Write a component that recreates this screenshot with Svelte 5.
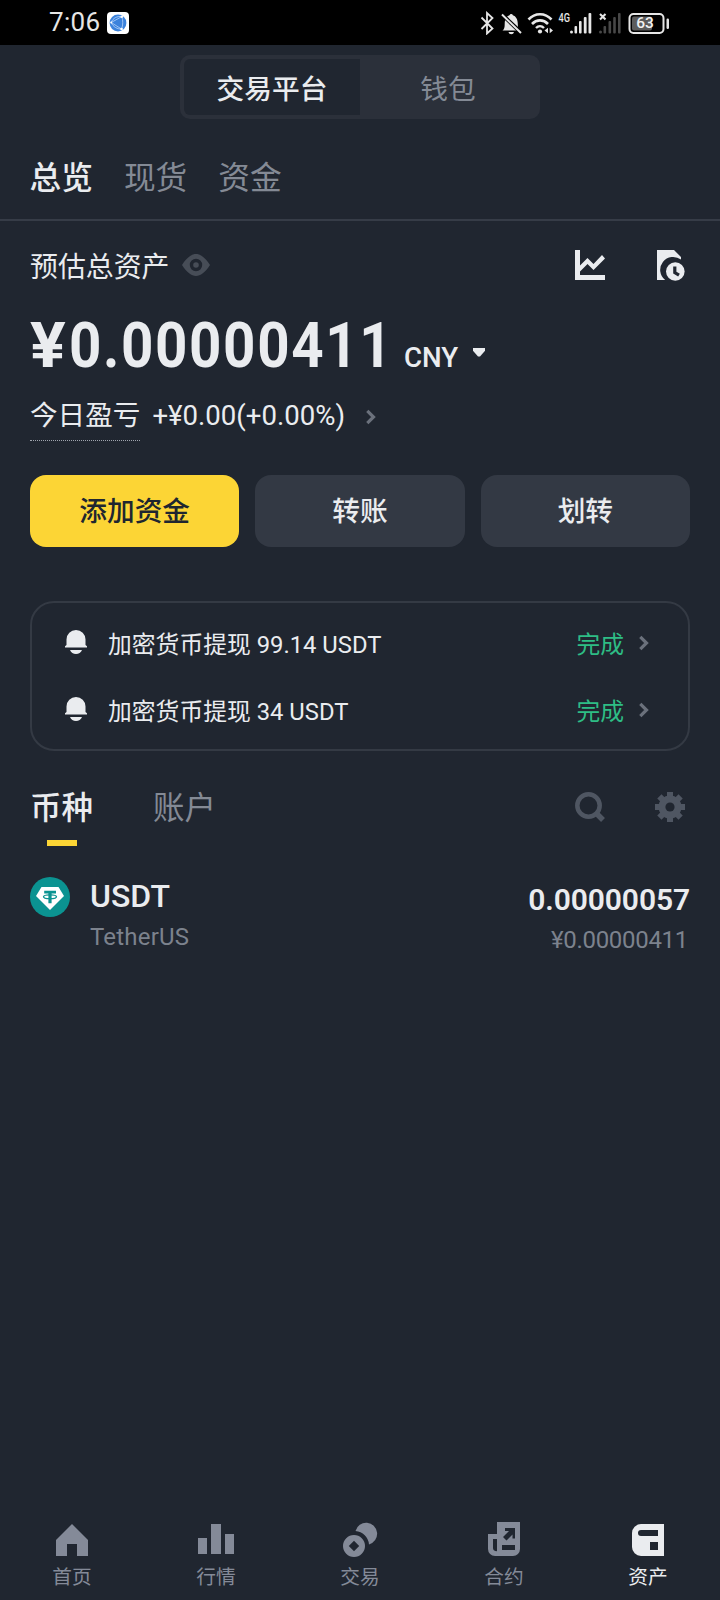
<script lang="ts">
  const accountTabs = ['总览', '现货', '资金'];
  const actions = ['添加资金', '转账', '划转'];

  const notices = [
    { title: '加密货币提现', amount: '99.14 USDT', status: '完成' },
    { title: '加密货币提现', amount: '34 USDT', status: '完成' },
  ];

  const navItems = [
    { id: 'home', label: '首页' },
    { id: 'markets', label: '行情' },
    { id: 'trade', label: '交易' },
    { id: 'futures', label: '合约' },
    { id: 'assets', label: '资产' },
  ];

  let platform = $state('exchange');
  let activeTab = $state('总览');
  let listTab = $state('coins');
  let activeNav = $state('assets');
</script>

{#snippet chevron()}
  <svg class="chevron" width="10" height="16" viewBox="0 0 10 16">
    <path d="M1.3 1.8 7.5 8l-6.2 6.2" fill="none" stroke="currentColor" stroke-width="3.2" />
  </svg>
{/snippet}

<div class="screen">
  <header class="status-bar">
    <span class="clock">7:06</span>
    <svg class="app-badge" width="22" height="22" viewBox="0 0 22 22">
      <rect width="22" height="22" rx="4" fill="#fff" />
      <circle cx="11" cy="11" r="8.4" fill="#3b82dc" />
      <path d="M4.2 10.5 14.8 4.6M4.2 10.5l10.4 6.6M14.8 4.6c1.4 4 1.2 8.5-.2 12.5M4.2 10.5C6 6 10 4 14.8 4.6M4.2 10.5c2 4.5 6 6.6 10.4 6.6" fill="none" stroke="#b9d6fa" stroke-width=".8" />
      <g fill="#fff">
        <circle cx="4.2" cy="10.5" r="1" />
        <circle cx="14.8" cy="4.8" r="1.3" />
        <circle cx="14.6" cy="17" r="1.3" />
      </g>
    </svg>
    <svg class="sys-icons" width="190" height="24" viewBox="480 10 190 24">
      <g fill="none" stroke="#e6e6e6" stroke-width="1.8">
        <path d="m481.500 16.500 11 11-5.500 5V12l5.500 5-11 11" />
        <path d="M528.500 18.500c6.500-7 16.500-7 23 0" stroke-width="2.6" />
        <path d="M532 23c4.500-4.800 11.500-4.800 16 0" stroke-width="2.6" />
        <path d="M536 27c2.400-2.500 5.600-2.500 8 0" stroke-width="2.4" />
        <rect x="629.5" y="13" width="34" height="19" rx="4" stroke-width="2" />
      </g>
      <g fill="#e6e6e6">
        <path d="M502.500 29.500h17.500c-1.800-1.300-2.200-3-2.200-6.500 0-5-2-7.800-4.900-8.800a1.800 1.800 0 0 0-3.400 0c-3 1-4.800 3.800-4.800 8.800 0 3.500-.4 5.200-2.200 6.500zM508.500 31h5.500a2.800 2.800 0 0 1-5.500 0z" />
        <circle cx="540" cy="30.5" r="2.1" />
        <path d="m544.500 29.500 3.500-2.700v5.400zM553 29.500l-3.300-2.700v5.400z" />
        <circle cx="571.5" cy="31" r="1.5" />
        <rect x="574.5" y="25" width="2.6" height="7.5" rx="1" />
        <rect x="579" y="20" width="2.6" height="12.5" rx="1" />
        <rect x="583.8" y="16" width="2.8" height="16.5" rx="1" />
        <rect x="588.5" y="12" width="2.8" height="20.5" rx="1" />
        <rect x="666.5" y="17.5" width="2.5" height="10.5" rx="1.2" />
      </g>
      <path d="m501.500 13 20 19" stroke="#000" stroke-width="4" />
      <path d="m502 13.500 19 18.500" stroke="#e6e6e6" stroke-width="2" />
      <path d="m600 13 5.500 5.500m0-5.500-5.500 5.500" stroke="#e6e6e6" stroke-width="2.1" />
      <g fill="#484848">
        <circle cx="600.5" cy="31" r="1.5" />
        <rect x="603.5" y="25" width="2.6" height="7.5" rx="1" />
        <rect x="608.5" y="20" width="2.6" height="12.5" rx="1" />
        <rect x="613.2" y="16" width="2.6" height="16.5" rx="1" />
        <rect x="618" y="12" width="2.6" height="20.5" rx="1" />
      </g>
      <rect x="632" y="15.5" width="20" height="14" rx="2" fill="#5c5c5c" />
      <text class="net" x="558.5" y="21.2" textLength="11.5" lengthAdjust="spacingAndGlyphs">4G</text>
      <text class="pct" x="636.2" y="27.3">63</text>
    </svg>
  </header>

  <div class="segment">
    <button class:on={platform === 'exchange'} onclick={() => (platform = 'exchange')}>交易平台</button>
    <button class:on={platform === 'wallet'} onclick={() => (platform = 'wallet')}>钱包</button>
  </div>

  <nav class="account-tabs">
    {#each accountTabs as tab}
      <button class:on={activeTab === tab} onclick={() => (activeTab = tab)}>{tab}</button>
    {/each}
  </nav>

  <section class="balance">
    <div class="balance-head">
      <span>预估总资产</span>
      <svg class="eye" width="28" height="22" viewBox="0 0 28 22">
        <path fill-rule="evenodd" d="M0 11C5 3.500 9.500 0 14 0s9 3.500 14 11c-5 7.500-9.500 11-14 11S5 18.500 0 11zm14-6.200a6.200 6.200 0 1 0 0 12.400 6.200 6.200 0 0 0 0-12.400zm0 3.400a2.800 2.800 0 1 1 0 5.600 2.800 2.800 0 0 1 0-5.600z" fill="#474d57" />
      </svg>
      <svg class="chart" width="30" height="30" viewBox="0 0 30 30">
        <path d="M0 0h5v15.500L12.500 8l6 6L27 5l3 3.500L18.500 20l-6-6L5 21.500V25h25v5H0z" fill="#eaecef" />
      </svg>
      <svg class="history" width="28" height="31" viewBox="0 0 28 31">
        <path d="M0 0h17l7 7v2.600A12.200 12.200 0 0 0 8.200 30H0z" fill="#eaecef" />
        <circle cx="18.3" cy="21.5" r="9.3" fill="#eaecef" />
        <path d="M17.800 16.500v6l4.200 2.600" fill="none" stroke="#202630" stroke-width="3.2" />
      </svg>
    </div>

    <div class="amount">
      <span class="total"><span class="yen">¥</span><span class="digits">0.00000411</span></span>
      <span class="currency">CNY</span>
      <svg width="14" height="9" viewBox="0 0 14 9"><path d="M1 0h12v2.800L8 8.500H6L1 2.800z" fill="#eaecef" /></svg>
    </div>

    <div class="pnl">
      <span class="pnl-label">今日盈亏</span>
      <span class="pnl-value">+¥0.00(+0.00%)</span>
      {@render chevron()}
    </div>

    <div class="actions">
      {#each actions as action, i}
        <button class:primary={i === 0}>{action}</button>
      {/each}
    </div>
  </section>

  <section class="notices">
    {#each notices as n}
      <div class="notice">
        <svg class="bell" width="22" height="24" viewBox="0 0 22 24">
          <path d="M1.500 15V9.500a9.500 9.500 0 0 1 19 0V15L22 16.200V17.500H0v-1.300zM5 20h12c-1 2.600-3.300 4-6 4s-5-1.400-6-4z" fill="#eaecef" />
        </svg>
        <span class="title">{n.title} <span>{n.amount}</span></span>
        <span class="status">{n.status}</span>
        {@render chevron()}
      </div>
    {/each}
  </section>

  <div class="list-head">
    <button class:on={listTab === 'coins'} onclick={() => (listTab = 'coins')}>币种</button>
    <button class:on={listTab === 'accounts'} onclick={() => (listTab = 'accounts')}>账户</button>
    <svg class="search" width="30" height="30" viewBox="0 0 30 30" fill="none" stroke="#4f5662">
      <circle cx="13.5" cy="13.5" r="11.2" stroke-width="4.5" />
      <path d="m20.500 20.500 7.500 7.500" stroke-width="5.5" />
    </svg>
    <svg class="gear" width="30" height="30" viewBox="-15 -15 30 30">
      <g fill="#4f5662">
        {#each [0, 45, 90, 135] as angle}
          <rect x="-3" y="-15" width="6" height="30" transform="rotate({angle})" />
        {/each}
        <circle r="11.5" />
      </g>
      <circle r="4.6" fill="#202630" />
    </svg>
  </div>

  <section class="coin">
    <svg width="40" height="40" viewBox="0 0 40 40">
      <circle cx="20" cy="20" r="20" fill="#0b9391" />
      <path d="M11.500 10h17l5.500 9-14 14L6 19z" fill="#fff" />
      <path d="M14.200 13.800h11.800v2.600h-4.400v9.800h-3.200v-9.800h-4.200z" fill="#0b9391" />
      <ellipse cx="20" cy="19.7" rx="6.5" ry="1.9" fill="none" stroke="#0b9391" stroke-width="1.3" />
    </svg>
    <div class="names">
      <span class="symbol">USDT</span>
      <span class="sub">TetherUS</span>
    </div>
    <div class="values">
      <span class="qty">0.00000057</span>
      <span class="sub">¥0.00000411</span>
    </div>
  </section>

  <nav class="bottom-nav">
    {#each navItems as item}
      <button class:on={activeNav === item.id} onclick={() => (activeNav = item.id)}>
        <svg width="36" height="36" viewBox="0 0 36 36" fill="currentColor">
          {#if item.id === 'home'}
            <path d="M18 2l16 16v16H23V22H13v12H2V18z" />
          {:else if item.id === 'markets'}
            <path d="M0 16h9v16H0zM13 2h10v30H13zM27 12h9v20h-9z" />
          {:else if item.id === 'trade'}
            <path d="M13.500 9A11 11 0 1 1 27 22.400 14.500 14.500 0 0 0 13.500 9z" />
            <path fill-rule="evenodd" d="M12 13a11 11 0 1 1 0 22 11 11 0 0 1 0-22zm0 5.800L6.800 24l5.200 5.200 5.200-5.200z" />
          {:else if item.id === 'futures'}
            <path fill-rule="evenodd" d="M11 0h23v27a7 7 0 0 1-7 7H9a7 7 0 0 1-7-7V12h9zM7 17v9c0 2 1 3.200 4 3.200V17zM16 23v5h13v-5zM19 6v3h4l-6 6 3.500 3.500 6-6v4H29V6z" />
          {:else}
            <path fill-rule="evenodd" d="M11 2h23v32H11a9 9 0 0 1-9-9V11a9 9 0 0 1 9-9zm0 6a3 3 0 0 0 0 6h17V8zM20 20v8h8v-8z" />
          {/if}
        </svg>
        <span>{item.label}</span>
      </button>
    {/each}
  </nav>
</div>

<style>
  :global(body) {
    background: #202630;
  }

  .screen {
    display: flex;
    flex-direction: column;
    width: 720px;
    height: 1600px;
    overflow: hidden;
    background: #202630;
    color: #eaecef;
    font-family: Roboto, 'Noto Sans CJK SC', sans-serif;
    white-space: nowrap;
  }

  button {
    padding: 0;
    border: 0;
    background: none;
    color: inherit;
    font: inherit;
  }

  svg {
    display: block;
    flex: none;
  }

  .status-bar {
    display: flex;
    align-items: center;
    height: 45px;
    padding: 0 50px 0 49px;
    box-sizing: border-box;
    background: #000;
    color: #e6e6e6;
  }

  .clock {
    width: 58px;
    font-size: 26px;
    line-height: 45px;
    letter-spacing: 0.3px;
  }

  .sys-icons {
    margin-left: auto;
  }

  .net {
    fill: #e6e6e6;
    font-size: 12px;
    font-weight: 500;
  }

  .pct {
    fill: #f2f2f2;
    font-size: 15.5px;
    font-weight: 500;
  }

  .segment {
    display: grid;
    grid-template-columns: 1fr 1fr;
    width: 360px;
    height: 64px;
    margin: 10px auto 0;
    padding: 4px;
    box-sizing: border-box;
    border-radius: 10px;
    background: #2b303a;
    font-size: 27.7px;
    line-height: 61px;
  }

  .segment button {
    height: 56px;
    border-radius: 6px;
    color: #848a95;
  }

  .segment button.on {
    border-radius: 6px 0 0 6px;
    background: #202630;
    color: #eaecef;
    font-weight: 500;
  }

  .account-tabs {
    display: flex;
    gap: 31px;
    height: 102px;
    padding: 38px 30px 0 29.5px;
    box-sizing: border-box;
    border-bottom: 2px solid #363c47;
    font-size: 31.7px;
    line-height: 44px;
  }

  .account-tabs button {
    height: 44px;
    color: #848a95;
  }

  .account-tabs button.on {
    color: #eaecef;
    font-weight: 500;
  }

  .balance {
    padding: 0 30px;
  }

  .balance-head {
    display: flex;
    align-items: center;
    height: 68px;
    padding-top: 25px;
    box-sizing: border-box;
    font-size: 27.9px;
    line-height: 44px;
  }

  .eye {
    margin: -6px 0 0 13px;
  }

  .chart {
    margin: -6px 52px 0 auto;
  }

  .history {
    margin: -5px 5px 0 0;
  }

  .amount {
    display: flex;
    align-items: baseline;
    height: 88px;
    line-height: 114px;
  }

  .total {
    width: 375px;
    font-size: 63.5px;
    font-weight: 700;
  }

  .total span {
    display: inline-block;
    transform-origin: left;
  }

  .total .yen {
    width: 39px;
    transform: scaleX(1.05);
  }

  .total .digits {
    letter-spacing: 1.8px;
    transform: scaleX(0.89);
  }

  .currency {
    width: 67px;
    margin-left: -1px;
    font-size: 27.7px;
    font-weight: 500;
  }

  .amount svg {
    margin-left: 1px;
    transform: translateY(-10px);
  }

  .pnl {
    display: flex;
    align-items: flex-start;
    height: 98px;
    padding-top: 16px;
    box-sizing: border-box;
    font-size: 27.6px;
    line-height: 46px;
  }

  .pnl-label {
    height: 47px;
    border-bottom: 1px dotted #a0a5ae;
  }

  .pnl-value {
    width: 214px;
    margin-left: 12px;
  }

  .chevron {
    color: #6b717c;
  }

  .pnl .chevron {
    margin-top: 16px;
  }

  .actions {
    display: grid;
    grid-template-columns: repeat(3, 1fr);
    gap: 16px;
  }

  .actions button {
    height: 72px;
    border-radius: 16px;
    background: #333944;
    font-size: 27.7px;
    font-weight: 500;
    line-height: 74px;
  }

  .actions .primary {
    background: #fcd535;
    color: #202630;
  }

  .notices {
    height: 150px;
    margin: 54px 30px 0;
    padding: 9px 39px 0 33px;
    box-sizing: border-box;
    border: 2px solid #343a44;
    border-radius: 24px;
    font-size: 23.8px;
  }

  .notice {
    display: flex;
    align-items: center;
    height: 67px;
    line-height: 67px;
  }

  .bell {
    margin-bottom: 8px;
  }

  .title {
    margin-left: 21px;
  }

  .status {
    margin-left: auto;
    color: #2ebd85;
  }

  .notice .chevron {
    margin: 0 0 6px 15px;
  }

  .list-head {
    display: flex;
    height: 95px;
    padding: 35px 35px 0 30px;
    box-sizing: border-box;
    font-size: 31.5px;
    line-height: 46px;
  }

  .list-head button {
    display: flex;
    flex-direction: column;
    align-items: center;
    height: 60px;
    margin-right: 60px;
    color: #848a95;
  }

  .list-head button.on {
    color: #eaecef;
    font-weight: 500;
  }

  .list-head button.on::after {
    content: '';
    width: 30px;
    height: 6px;
    margin-top: 8px;
    background: #fcd535;
  }

  .search {
    margin: 6px 50px 0 auto;
  }

  .gear {
    margin-top: 6px;
  }

  .coin {
    display: flex;
    padding: 31px 30px 0;
  }

  .names,
  .values {
    display: flex;
    flex-direction: column;
  }

  .names {
    margin-left: 20px;
  }

  .symbol {
    font-size: 32px;
    font-weight: 500;
    line-height: 38px;
  }

  .sub {
    color: #7c828d;
    font-size: 24px;
    line-height: 45px;
  }

  .names .sub {
    letter-spacing: 0.2px;
  }

  .values {
    align-items: flex-end;
    margin-left: auto;
    padding-top: 4px;
  }

  .qty {
    font-size: 30px;
    font-weight: 600;
    line-height: 38px;
    letter-spacing: -0.1px;
  }

  .values .sub {
    margin-right: 2px;
    line-height: 42px;
    letter-spacing: -0.3px;
  }

  .bottom-nav {
    display: grid;
    grid-template-columns: repeat(5, 1fr);
    height: 78px;
    margin-top: auto;
    font-size: 19.7px;
  }

  .bottom-nav button {
    display: flex;
    flex-direction: column;
    align-items: center;
    color: #848a98;
    line-height: 39px;
  }

  .bottom-nav button.on {
    color: #eaecef;
  }
</style>
